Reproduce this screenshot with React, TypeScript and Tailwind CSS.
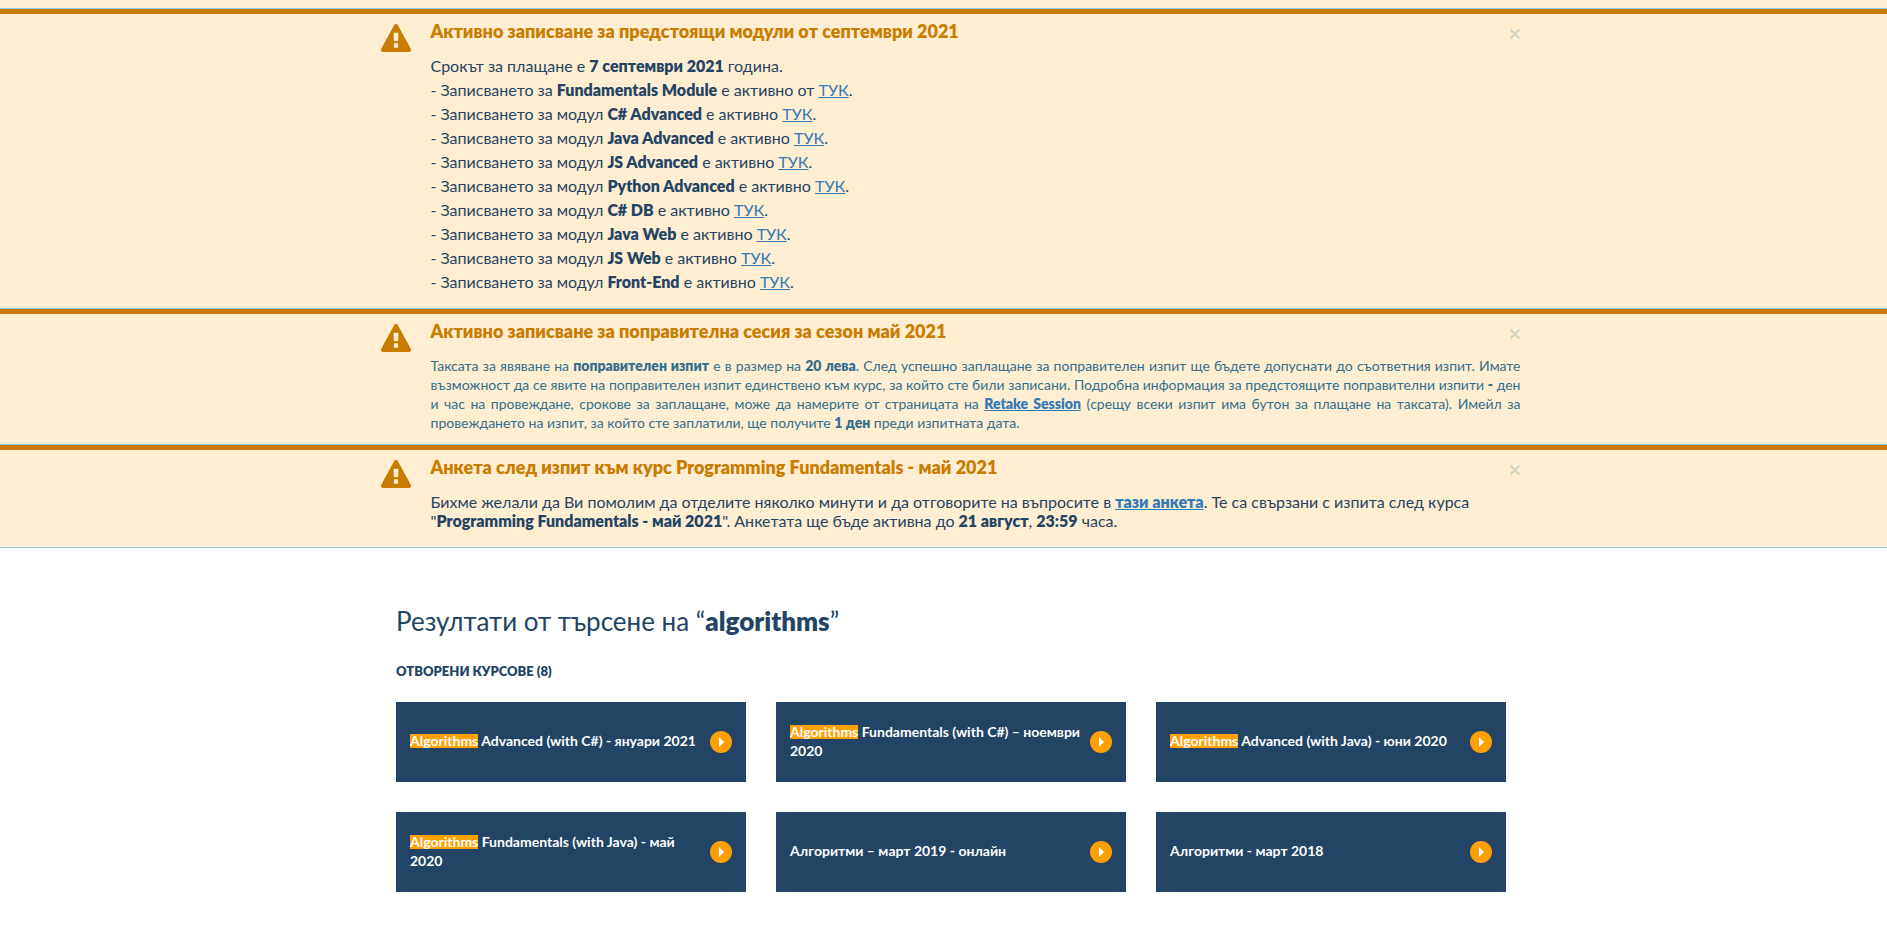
import React from "react";

const Warning = () => (
  <svg viewBox="0 0 1792 1664" className="mt-[10px] h-7 w-[30px] shrink-0 fill-[#c97c00]" aria-hidden="true">
    <path d="M1024 1375v-190q0-14-9.5-23.5t-22.5-9.5h-192q-13 0-22.5 9.5t-9.5 23.5v190q0 14 9.5 23.5t22.5 9.5h192q13 0 22.5-9.5t9.5-23.5zm-2-374l18-459q0-12-10-19-13-11-24-11h-220q-11 0-24 11-10 7-10 21l17 457q0 10 10 16.5t24 6.5h185q14 0 23.5-6.5t10.5-16.5zm-14-934l768 1408q35 63-2 126-17 29-46.5 46t-63.5 17h-1536q-34 0-63.5-17t-46.5-46q-37-63-2-126l768-1408q17-31 47-49t65-18 65 18 47 49z" />
  </svg>
);

function Alert({ title, children }: { title: string; children: React.ReactNode }) {
  return (
    <section className="border-t-5 border-b border-t-[#c97c00] border-b-[#8cc9e8] bg-[#ffeed2] pl-[14px]">
      <div className="mx-auto flex max-w-[1140px] gap-5">
        <Warning />
        <div className="min-w-0 grow pb-3">
          <div className="flex h-10 items-start justify-between pt-[6px]">
            <h2 className="text-lg leading-[22px] font-extrabold text-[#c97c00]">{title}</h2>
            <button type="button" aria-label="Затвори" className="mt-2 flex h-3 w-3 items-center justify-center text-[#d6d5c5]">
              <svg viewBox="0 0 12 12" className="h-3 w-3 stroke-current stroke-[2.4]" aria-hidden="true">
                <path d="M1.5 1.5l9 9M10.5 1.5l-9 9" />
              </svg>
            </button>
          </div>
          {children}
        </div>
      </div>
    </section>
  );
}

const B = ({ children }: { children: React.ReactNode }) => <b className="font-extrabold">{children}</b>;

const link = "text-[#337ab7] underline";
const strongLink = "font-extrabold text-[#337ab7] underline";

const modules = ["C# Advanced", "Java Advanced", "JS Advanced", "Python Advanced", "C# DB", "Java Web", "JS Web", "Front-End"];

const courses = [
  { mark: "Algorithms", rest: " Advanced (with C#) - януари 2021" },
  { mark: "Algorithms", rest: " Fundamentals (with C#) – ноември 2020" },
  { mark: "Algorithms", rest: " Advanced (with Java) - юни 2020" },
  { mark: "Algorithms", rest: " Fundamentals (with Java) - май 2020" },
  { mark: "", rest: "Алгоритми – март 2019 - онлайн" },
  { mark: "", rest: "Алгоритми - март 2018" },
];

export default function App() {
  return (
    <div className="bg-white font-[Lato,sans-serif] text-[#234465]">
      <div className="h-2 bg-[#ffeed2]" />
      <div className="h-px bg-[#8cc9e8]" />
      <Alert title="Активно записване за предстоящи модули от септември 2021">
        <div className="pb-[2px] text-base leading-6">
          <p>
            Срокът за плащане е <B>7 септември 2021</B> година.
          </p>
          <p>
            - Записването за <B>Fundamentals Module</B> е активно от <a href="#fundamentals" className={link}>ТУК</a>.
          </p>
          {modules.map((m) => (
            <p key={m}>
              - Записването за модул <B>{m}</B> е активно <a href="#module" className={link}>ТУК</a>.
            </p>
          ))}
        </div>
      </Alert>
      <Alert title="Активно записване за поправителна сесия за сезон май 2021">
        <p className="pt-[2px] text-justify text-sm leading-[19px] text-[#31708f]">
          Таксата за явяване на <B>поправителен изпит</B> е в размер на <B>20 лева</B>. След успешно заплащане за поправителен изпит ще бъдете допуснати до съответния изпит. Имате възможност да се явите на поправителен изпит единствено към курс, за който сте били записани. Подробна информация за предстоящите поправителни изпити <B>-</B> ден и час на провеждане, срокове за заплащане, може да намерите от страницата на <a href="#retake" className={strongLink}>Retake Session</a> (срещу всеки изпит има бутон за плащане на таксата). Имейл за провеждането на изпит, за който сте заплатили, ще получите <B>1 ден</B> преди изпитната дата.
        </p>
      </Alert>
      <Alert title="Анкета след изпит към курс Programming Fundamentals - май 2021">
        <p className="pt-[2px] pb-[5px] text-base leading-[19px]">
          Бихме желали да Ви помолим да отделите няколко минути и да отговорите на въпросите в <a href="#survey" className={strongLink}>тази анкета</a>. Те са свързани с изпита след курса "<B>Programming Fundamentals - май 2021</B>". Анкетата ще бъде активна до <B>21 август</B>, <B>23:59</B> часа.
        </p>
      </Alert>
      <main className="pt-14 pb-5 pl-[15px]">
        <div className="mx-auto max-w-[1110px]">
          <h1 className="text-[26px] leading-[34px]">
            Резултати от търсене на “<B>algorithms</B>”
          </h1>
          <h2 className="mt-[23px] text-[13px] leading-5 font-extrabold uppercase">Отворени курсове (8)</h2>
          <ul className="mt-[21px] grid grid-cols-3 gap-[30px]">
            {courses.map((c) => (
              <li key={c.rest}>
                <a href="#course" className="flex h-20 items-center justify-between gap-2 bg-[#234465] px-[14px] text-sm leading-[19px] font-bold text-white">
                  <span className="pb-[3px]">
                    {c.mark && <mark className="inline-block bg-[#ffa000] leading-[14px] text-white">{c.mark}</mark>}
                    {c.rest}
                  </span>
                  <svg viewBox="0 0 22 22" className="h-[22px] w-[22px] shrink-0" aria-hidden="true">
                    <circle cx="11" cy="11" r="11" fill="#ffa000" />
                    <path d="M9 6l5 5-5 5z" fill="#fff" />
                  </svg>
                </a>
              </li>
            ))}
          </ul>
        </div>
      </main>
    </div>
  );
}
